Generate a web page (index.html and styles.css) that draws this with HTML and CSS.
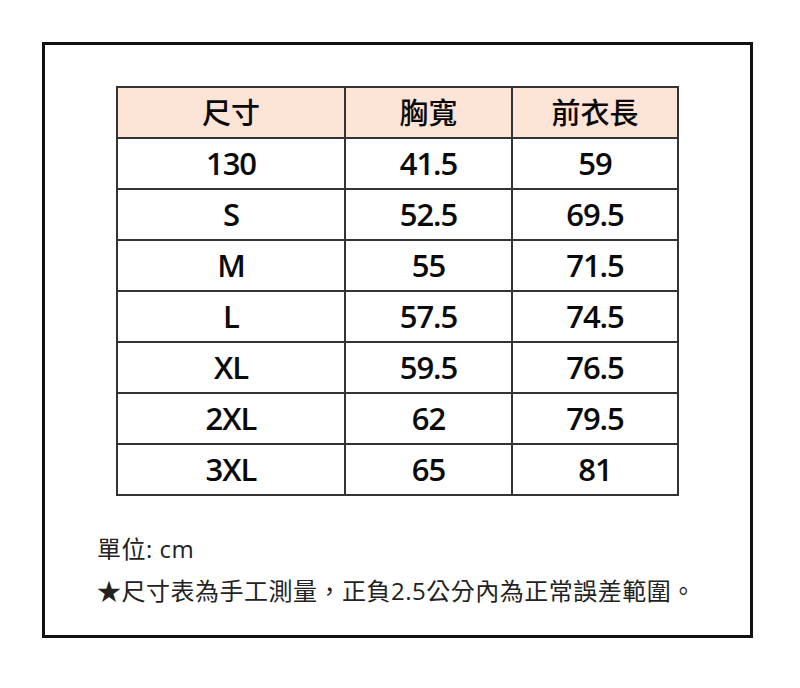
FILE: index.html
```html
<!DOCTYPE html>
<html lang="zh-Hant">
<head>
<meta charset="utf-8">
<title>尺寸表</title>
<link rel="stylesheet" href="styles.css">
</head>
<body>
<div class="frame">
  <table class="size-table">
    <colgroup>
      <col class="c1"><col class="c2"><col class="c3">
    </colgroup>
    <thead>
      <tr><th>尺寸</th><th>胸寬</th><th>前衣長</th></tr>
    </thead>
    <tbody>
      <tr><td>130</td><td>41.5</td><td>59</td></tr>
      <tr><td>S</td><td>52.5</td><td>69.5</td></tr>
      <tr><td>M</td><td>55</td><td>71.5</td></tr>
      <tr><td>L</td><td>57.5</td><td>74.5</td></tr>
      <tr><td>XL</td><td>59.5</td><td>76.5</td></tr>
      <tr><td>2XL</td><td>62</td><td>79.5</td></tr>
      <tr><td>3XL</td><td>65</td><td>81</td></tr>
    </tbody>
  </table>
  <div class="notes">
    <p class="note">單位: cm</p>
    <p class="note">★尺寸表為手工測量，正負2.5公分內為正常誤差範圍。</p>
  </div>
</div>
</body>
</html>
```
FILE: styles.css
```css
html, body {
  margin: 0;
  padding: 0;
  background: #ffffff;
}
body {
  font-family: "Open Sans", "Noto Sans CJK TC", sans-serif;
  color: #111;
}
.frame {
  box-sizing: border-box;
  margin: 42px 0 0 42px;
  width: 711px;
  height: 596px;
  border: 3px solid #111;
  padding: 41px 0 0 71px;
}
.size-table {
  border-collapse: collapse;
  table-layout: fixed;
  width: 561px;
  border: 2px solid #333;
}
.c1 { width: 228px; }
.c2 { width: 167px; }
.c3 { width: 166px; }
.size-table tr { height: 51px; }
.size-table th,
.size-table td {
  border: 2px solid #333;
  padding: 0;
  text-align: center;
  vertical-align: middle;
  font-size: 31px;
  line-height: 1;
  font-weight: 600;
  letter-spacing: -1px;
  color: #0a0a0a;
}
.size-table th {
  background: #fce4d6;
  font-size: 29px;
  font-weight: 500;
  letter-spacing: 0;
}
.notes {
  margin: 32px 0 0 -19px;
}
.note {
  margin: 0;
  font-size: 24px;
  line-height: 42px;
  letter-spacing: 0.5px;
  color: #222;
}
```
